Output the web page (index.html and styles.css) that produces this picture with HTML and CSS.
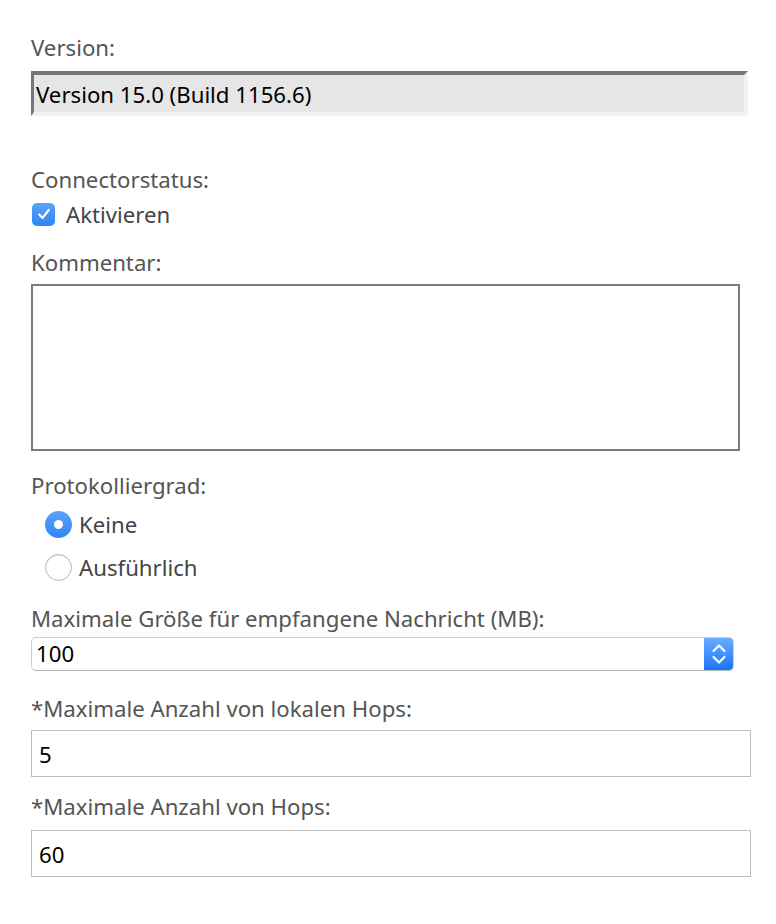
FILE: index.html
```html
<!DOCTYPE html>
<html lang="de">
<head>
    <meta charset="UTF-8">
    <meta name="viewport" content="width=device-width, initial-scale=1.0">
    <title>Connector</title>
    <link rel="stylesheet" href="styles.css">
</head>
<body>
    <form class="connector-form">
        <div class="label">Version:</div>
        <div class="readonly-box">Version 15.0 (Build 1156.6)</div>

        <div class="label label-status">Connectorstatus:</div>
        <div class="check-row">
            <span class="checkbox">
                <svg width="16" height="16" viewBox="0 0 14 14"><path d="M2.8 7.4 L5.8 10.4 L11.2 3.4" fill="none" stroke="#fff" stroke-width="2" stroke-linecap="round" stroke-linejoin="round"/></svg>
            </span>
            <span class="check-text">Aktivieren</span>
        </div>

        <div class="label label-comment">Kommentar:</div>
        <div class="textarea"></div>

        <div class="label label-log">Protokolliergrad:</div>
        <div class="radio-row radio-first">
            <span class="radio radio-on"></span>
            <span class="radio-text">Keine</span>
        </div>
        <div class="radio-row radio-second">
            <span class="radio"></span>
            <span class="radio-text">Ausführlich</span>
        </div>

        <div class="label label-size">Maximale Größe für empfangene Nachricht (MB):</div>
        <div class="select">
            <span class="select-value">100</span>
            <span class="stepper">
                <svg width="16" height="24" viewBox="0 0 16 24"><path d="M2.5 9 L8 3.5 L13.5 9 M2.5 15 L8 20.5 L13.5 15" fill="none" stroke="#fff" stroke-width="2.2" stroke-linecap="round" stroke-linejoin="round"/></svg>
            </span>
        </div>

        <div class="label label-local">*Maximale Anzahl von lokalen Hops:</div>
        <div class="text-input input-local">5</div>

        <div class="label label-hops">*Maximale Anzahl von Hops:</div>
        <div class="text-input input-hops">60</div>
    </form>
</body>
</html>
```

FILE: styles.css
```css
* {
    margin: 0;
    padding: 0;
    box-sizing: border-box;
}

body {
    font-family: 'Noto Sans', 'Open Sans', sans-serif;
    font-size: 22.2px;
    color: #000;
    background: #fff;
    padding: 36px 0 0 31px;
}

.connector-form {
    display: flex;
    flex-direction: column;
    align-items: flex-start;
}

.label {
    color: #555;
    line-height: 24px;
    height: 24px;
    white-space: nowrap;
}

.readonly-box {
    width: 717px;
    height: 45px;
    margin-top: 11px;
    background: #e6e6e6;
    border-style: solid;
    border-width: 4px 4px 4px 3px;
    border-color: #777 #f2f2f2 #f2f2f2 #777;
    padding-left: 2px;
    line-height: 39px;
}

.label-status {
    margin-top: 52px;
}

.check-row {
    display: flex;
    align-items: center;
    height: 24px;
    margin-top: 10px;
    padding-left: 1px;
}

.checkbox {
    width: 23px;
    height: 23px;
    border-radius: 5px;
    background: linear-gradient(#5aa2fb, #2f86f4);
    display: flex;
    align-items: center;
    justify-content: center;
}

.check-text {
    color: #444;
    margin-left: 11px;
}

.label-comment {
    margin-top: 25px;
}

.textarea {
    width: 709px;
    height: 167px;
    margin-top: 9px;
    border: 2px solid #7a7a7a;
}

.label-log {
    margin-top: 23px;
}

.radio-row {
    display: flex;
    align-items: center;
    height: 28px;
    padding-left: 14px;
}

.radio-first {
    margin-top: 12px;
}

.radio-second {
    margin-top: 15px;
}

.radio {
    width: 27px;
    height: 27px;
    border-radius: 50%;
    background: #fff;
    border: 1px solid #b5b5b5;
    box-shadow: inset 0 1px 1px rgba(0, 0, 0, 0.08);
    display: flex;
    align-items: center;
    justify-content: center;
}

.radio-on {
    border: none;
    background: linear-gradient(#5aa2fb, #2f86f4);
    box-shadow: none;
}

.radio-on::after {
    content: "";
    width: 9px;
    height: 9px;
    border-radius: 50%;
    background: #fff;
}

.radio-text {
    color: #444;
    margin-left: 7px;
}

.label-size {
    margin-top: 26px;
}

.select {
    width: 703px;
    height: 34px;
    margin-top: 6px;
    border: 1px solid #d0d0d0;
    border-bottom-color: #b8b8b8;
    border-radius: 5px;
    display: flex;
    align-items: center;
    justify-content: space-between;
    overflow: hidden;
}

.select-value {
    padding-left: 4px;
    line-height: 34px;
}

.stepper {
    width: 30px;
    height: 34px;
    margin-right: -1px;
    background: linear-gradient(#6caeff, #1673fb);
    display: flex;
    align-items: center;
    justify-content: center;
}

.label-local {
    margin-top: 26px;
}

.text-input {
    width: 720px;
    height: 47px;
    border: 1px solid #bdbdbd;
    padding-left: 7px;
    line-height: 47px;
}

.input-local {
    margin-top: 9px;
}

.label-hops {
    margin-top: 18px;
}

.input-hops {
    margin-top: 11px;
}
```
